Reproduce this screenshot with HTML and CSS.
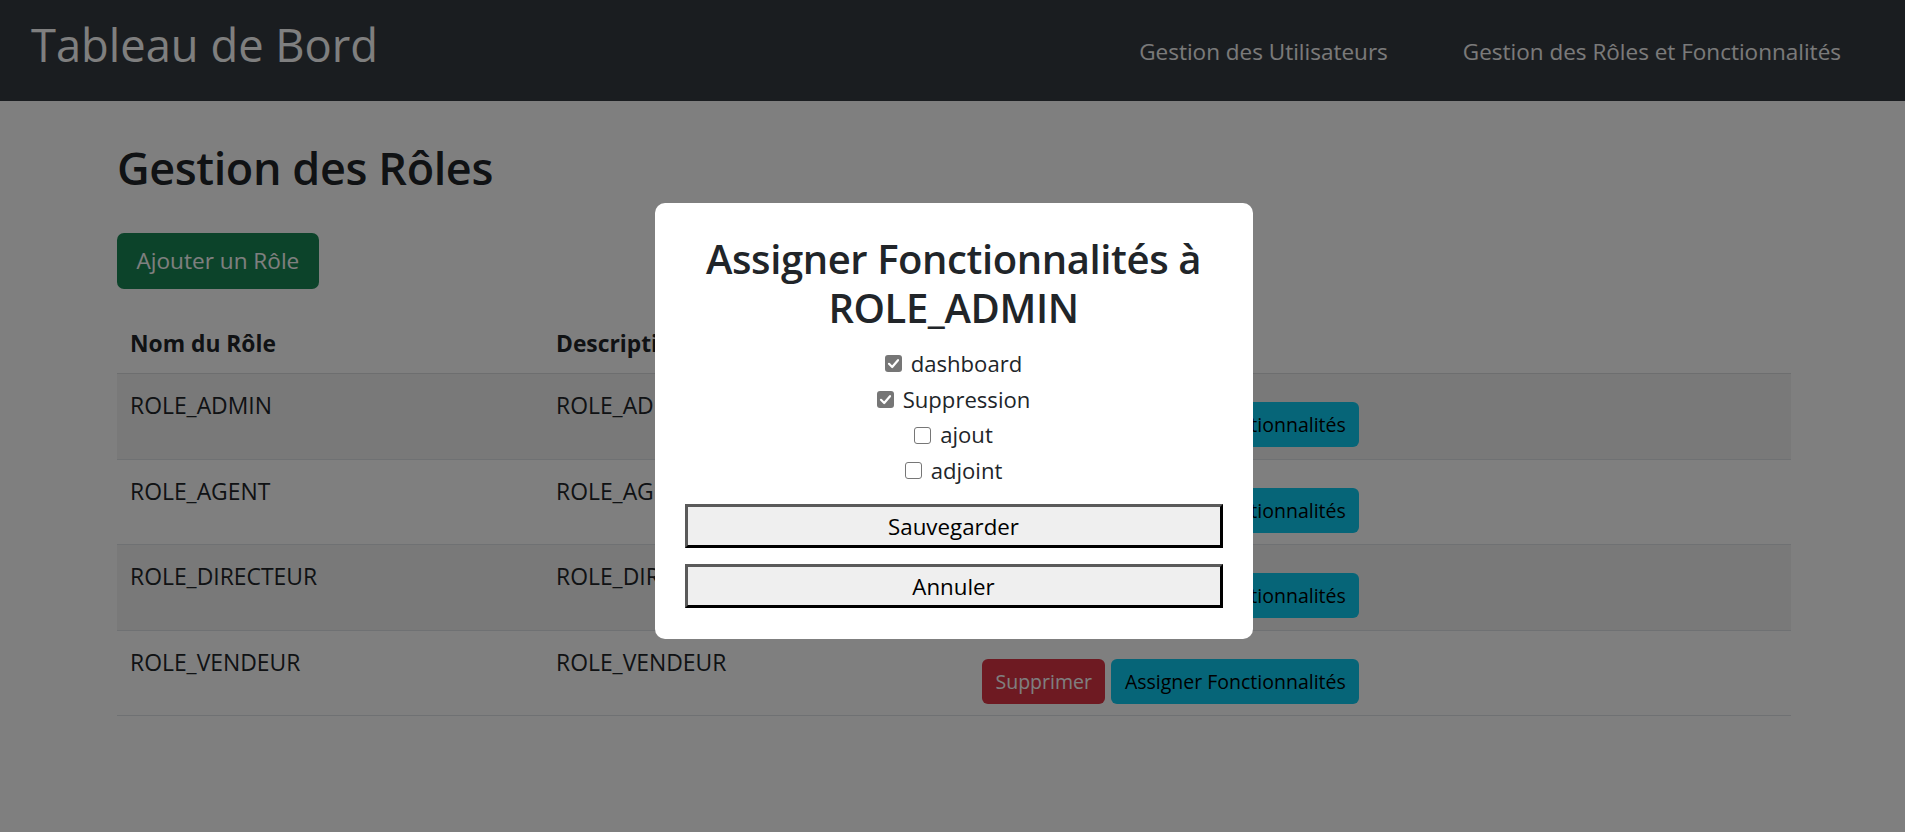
FILE: index.html
```html
<!DOCTYPE html>
<html lang="fr">
<head>
<meta charset="utf-8">
<title>Tableau de Bord</title>
<link rel="stylesheet" href="styles.css">
</head>
<body>
<nav class="navbar">
  <a class="brand" href="#">Tableau de Bord</a>
  <ul class="nav">
    <li><a class="nav-link" href="#">Gestion des Utilisateurs</a></li>
    <li><a class="nav-link" href="#">Gestion des Rôles et Fonctionnalités</a></li>
  </ul>
</nav>

<main class="container">
  <h1 class="page-title">Gestion des Rôles</h1>
  <button class="btn btn-lg btn-success" type="button">Ajouter un Rôle</button>

  <table class="roles">
    <thead>
      <tr><th class="col-name">Nom du Rôle</th><th class="col-desc">Description</th><th>Actions</th></tr>
    </thead>
    <tbody>
      <tr class="striped">
        <td>ROLE_ADMIN</td><td>ROLE_ADMIN</td>
        <td><div class="actions"><button class="btn btn-danger" type="button">Supprimer</button><button class="btn btn-info" type="button">Assigner Fonctionnalités</button></div></td>
      </tr>
      <tr>
        <td>ROLE_AGENT</td><td>ROLE_AGENT</td>
        <td><div class="actions"><button class="btn btn-danger" type="button">Supprimer</button><button class="btn btn-info" type="button">Assigner Fonctionnalités</button></div></td>
      </tr>
      <tr class="striped">
        <td>ROLE_DIRECTEUR</td><td>ROLE_DIRECTEUR</td>
        <td><div class="actions"><button class="btn btn-danger" type="button">Supprimer</button><button class="btn btn-info" type="button">Assigner Fonctionnalités</button></div></td>
      </tr>
      <tr>
        <td>ROLE_VENDEUR</td><td>ROLE_VENDEUR</td>
        <td><div class="actions"><button class="btn btn-danger" type="button">Supprimer</button><button class="btn btn-info" type="button">Assigner Fonctionnalités</button></div></td>
      </tr>
    </tbody>
  </table>
</main>

<div class="backdrop"></div>

<div class="modal" role="dialog">
  <h2 class="modal-title">Assigner Fonctionnalités à<br>ROLE_ADMIN</h2>
  <div class="features">
    <label class="feature"><span class="box checked"><svg viewBox="0 0 17 17" width="17" height="17"><path d="M4 8.8 L7.2 12 L13 5.2" fill="none" stroke="#fff" stroke-width="2.2" stroke-linecap="round" stroke-linejoin="round"/></svg></span>dashboard</label>
    <label class="feature"><span class="box checked"><svg viewBox="0 0 17 17" width="17" height="17"><path d="M4 8.8 L7.2 12 L13 5.2" fill="none" stroke="#fff" stroke-width="2.2" stroke-linecap="round" stroke-linejoin="round"/></svg></span>Suppression</label>
    <label class="feature"><span class="box"></span>ajout</label>
    <label class="feature"><span class="box"></span>adjoint</label>
  </div>
  <button class="plain-btn" type="button">Sauvegarder</button>
  <button class="plain-btn" type="button">Annuler</button>
</div>
</body>
</html>
```
FILE: styles.css
```css
* { box-sizing: border-box; }

html, body {
  margin: 0;
  padding: 0;
  height: 100%;
}

body {
  font-family: "Open Sans", sans-serif;
  color: #212529;
  background: #fff;
  overflow: hidden;
}

/* ---------- navbar ---------- */
.navbar {
  height: 101px;
  background: #343a40;
  display: flex;
  justify-content: space-between;
  align-items: flex-start;
  padding: 0 64px 0 31px;
}

.brand {
  font-size: 45.3px;
  line-height: 54px;
  padding-top: 18px;
  color: #fff;
  text-decoration: none;
  white-space: nowrap;
}

.nav {
  list-style: none;
  margin: 0;
  padding: 35px 0 0;
  display: flex;
  gap: 75px;
}

.nav-link {
  font-size: 22.5px;
  line-height: 34px;
  color: #f4f4f4;
  text-decoration: none;
  white-space: nowrap;
}

/* ---------- page ---------- */
.container {
  margin: 0 114px 0 117px;
}

.page-title {
  margin: 38.5px 0 0;
  font-size: 45px;
  font-weight: 600;
  letter-spacing: -0.4px;
  line-height: 55.2px;
  color: #212529;
}

.btn {
  font-family: "Open Sans", sans-serif;
  border: 0;
  border-radius: 6px;
  cursor: pointer;
  white-space: nowrap;
}

.btn-lg {
  display: block;
  margin-top: 38.3px;
  height: 56px;
  padding: 0 19.5px;
  font-size: 22.6px;
  line-height: 34px;
  border-radius: 7px;
}

.btn-success {
  background: #198754;
  color: #fff;
}

/* ---------- table ---------- */
.roles {
  margin-top: 23px;
  width: 100%;
  border-collapse: collapse;
  table-layout: fixed;
}

.roles th,
.roles td {
  text-align: left;
  vertical-align: top;
  padding: 15px 13px 12px;
  font-size: 22.9px;
  line-height: 34px;
  color: #212529;
  border-bottom: 1px solid #dee2e6;
}

.roles th {
  font-weight: 700;
  font-size: 22.8px;
  border-bottom-color: #dadcdf;
}

.roles .col-name,
.roles .col-desc {
  width: 426px;
}

.roles td {
  height: 85.5px;
  padding-bottom: 0;
}

.roles tr.striped td {
  background: #f2f2f2;
}

.actions {
  display: flex;
  gap: 6px;
  padding-top: 13px;
}

.btn-danger,
.btn-info {
  height: 45px;
  padding: 0 13.5px;
  font-size: 19.5px;
  line-height: 45px;
}

.btn-danger {
  background: #dc3545;
  color: #fff;
}

.btn-info {
  background: #0dcaf0;
  color: #000;
}

/* ---------- modal ---------- */
.backdrop {
  position: fixed;
  inset: 0;
  background: rgba(0, 0, 0, 0.5);
}

.modal {
  position: fixed;
  top: 203px;
  left: calc(50% - 298px);
  width: 598px;
  padding: 31px 30px 31px;
  background: #fff;
  border-radius: 10px;
  display: flex;
  flex-direction: column;
  align-items: stretch;
}

.modal-title {
  margin: 0;
  font-size: 40px;
  font-weight: 600;
  letter-spacing: -0.4px;
  line-height: 49px;
  text-align: center;
  color: #212529;
}

.features {
  margin-top: 14px;
  display: flex;
  flex-direction: column;
  align-items: center;
}

.feature {
  display: inline-flex;
  align-items: center;
  gap: 9px;
  height: 35.7px;
  font-size: 22.1px;
  line-height: 35.7px;
  color: #212529;
}

.box {
  width: 17px;
  height: 17px;
  flex: none;
  border-radius: 3px;
  border: 1.5px solid #767676;
  background: #fff;
  display: flex;
}

.box.checked {
  border: 0;
  background: #767676;
}

.plain-btn {
  display: block;
  width: 100%;
  height: 44px;
  margin-top: 15px;
  padding: 3px 0 0;
  font-family: "Open Sans", sans-serif;
  font-size: 22.3px;
  line-height: 34px;
  color: #000;
  background: #efefef;
  border: 3px solid;
  border-color: #5a5a5a #000 #000 #5a5a5a;
}

.plain-btn + .plain-btn {
  margin-top: 16px;
}
```
